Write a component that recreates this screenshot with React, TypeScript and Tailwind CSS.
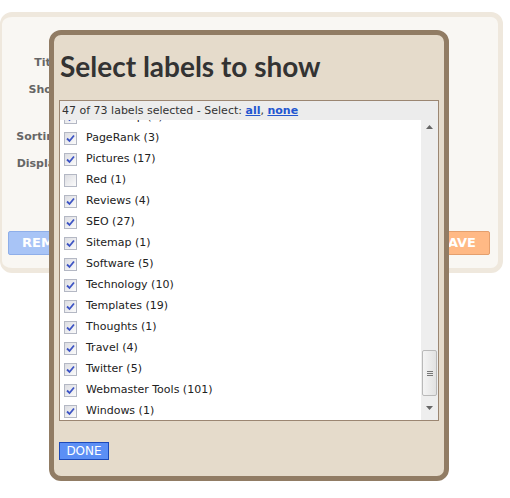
import React from "react";

type LabelItem = { name: string; count: number; checked: boolean };

const LABELS: LabelItem[] = [
  { name: "Photoshop", count: 2, checked: true },
  { name: "PageRank", count: 3, checked: true },
  { name: "Pictures", count: 17, checked: true },
  { name: "Red", count: 1, checked: false },
  { name: "Reviews", count: 4, checked: true },
  { name: "SEO", count: 27, checked: true },
  { name: "Sitemap", count: 1, checked: true },
  { name: "Software", count: 5, checked: true },
  { name: "Technology", count: 10, checked: true },
  { name: "Templates", count: 19, checked: true },
  { name: "Thoughts", count: 1, checked: true },
  { name: "Travel", count: 4, checked: true },
  { name: "Twitter", count: 5, checked: true },
  { name: "Webmaster Tools", count: 101, checked: true },
  { name: "Windows", count: 1, checked: true },
];

function XpCheckbox({ checked }: { checked: boolean }) {
  return (
    <div className="w-[13px] h-[13px] border border-[#b4b8c4] bg-gradient-to-br from-[#dcdde2] to-[#fbfbfb] flex items-center justify-center shrink-0">
      {checked && (
        <svg width="9" height="9" viewBox="0 0 9 9">
          <path d="M1 4.5 L3.5 7 L8 1.5" fill="none" stroke="#3d54c4" strokeWidth="1.8" />
        </svg>
      )}
    </div>
  );
}

function Scrollbar() {
  return (
    <div className="w-[17px] h-full bg-[#eeeeee] flex flex-col items-center shrink-0">
      <div className="h-[14px] flex items-center justify-center">
        <svg width="7" height="4" viewBox="0 0 7 4">
          <path d="M0 4 L3.5 0 L7 4 Z" fill="#666" />
        </svg>
      </div>
      <div className="flex-1" />
      {/* thumb */}
      <div className="w-[15px] h-[46px] rounded-[2px] border border-[#b9b9b9] bg-gradient-to-r from-[#f4f4f4] to-[#e2e2e2] flex flex-col items-center justify-center gap-[1px]">
        <div className="w-[6px] h-[1px] bg-[#777]" />
        <div className="w-[6px] h-[1px] bg-[#777]" />
        <div className="w-[6px] h-[1px] bg-[#777]" />
      </div>
      <div className="h-[24px] flex items-center justify-center">
        <svg width="7" height="4" viewBox="0 0 7 4">
          <path d="M0 0 L3.5 4 L7 0 Z" fill="#666" />
        </svg>
      </div>
    </div>
  );
}

export default function App() {
  return (
    <div className="relative w-[510px] h-[498px] bg-white overflow-hidden font-['DejaVu_Sans',Verdana,sans-serif]">
      {/* Settings panel behind the dialog */}
      <div className="mt-[12px] w-[503px] h-[261px] rounded-[12px] border-[5px] border-l-[2px] border-[#efe8dd] bg-[#f9f7f3] relative">
        <div className="pt-[38px] w-[60px] flex flex-col items-end text-[11px] font-bold text-[#666] whitespace-nowrap">
          <div className="h-[27px]">Title</div>
          <div className="h-[47px]">Show</div>
          <div className="h-[27px]">Sorting</div>
          <div className="h-[27px]">Display</div>
        </div>
        <div className="absolute left-[6px] top-[214px] w-[70px] h-[24px] bg-[#a8c4f6] border border-[#8eaee9] rounded-[2px] text-white font-bold text-[13px] flex items-center pl-[13px]">
          REMOVE
        </div>
        <div className="absolute right-[8px] top-[214px] w-[68px] h-[24px] bg-[#ffb985] border border-[#e49f6d] rounded-[2px] text-white font-bold text-[13px] flex items-center justify-end pr-[13px]">
          SAVE
        </div>
      </div>

      {/* Dialog */}
      <div className="absolute left-[49px] top-[30px] w-[400px] h-[451px] rounded-[12px] border-[5px] border-[#917c64] bg-[#e5dbcb] px-[5px]">
        <h1 className="mt-[14px] mb-[17px] ml-[1px] text-[28px] leading-[34px] font-bold text-[#333] font-['Lato','DejaVu_Sans',sans-serif]">
          Select labels to show
        </h1>
        <div className="w-[380px] h-[321px] border border-[#9b8672] bg-white flex flex-col">
          <div className="h-[19px] bg-[#ececec] text-[11px] text-[#333] pl-[2px] leading-[19px] whitespace-nowrap">
            47 of 73 labels selected - Select:{" "}
            <a className="text-[#2356d0] font-bold underline">all</a>,{" "}
            <a className="text-[#2356d0] font-bold underline">none</a>
          </div>
          <div className="flex-1 flex overflow-hidden">
            <div className="flex-1 overflow-hidden">
              <div className="-mt-[13px]">
                {LABELS.map((l) => (
                  <div key={l.name} className="h-[21px] flex items-center pl-[4px] gap-[9px] text-[11px] text-[#222]">
                    <XpCheckbox checked={l.checked} />
                    <span>
                      {l.name} ({l.count})
                    </span>
                  </div>
                ))}
              </div>
            </div>
            <Scrollbar />
          </div>
        </div>
        <button className="mt-[21px] w-[50px] h-[18px] bg-[#5c8ff5] border border-[#1d49b8] text-white text-[12px] leading-[16px]">
          DONE
        </button>
      </div>
    </div>
  );
}
